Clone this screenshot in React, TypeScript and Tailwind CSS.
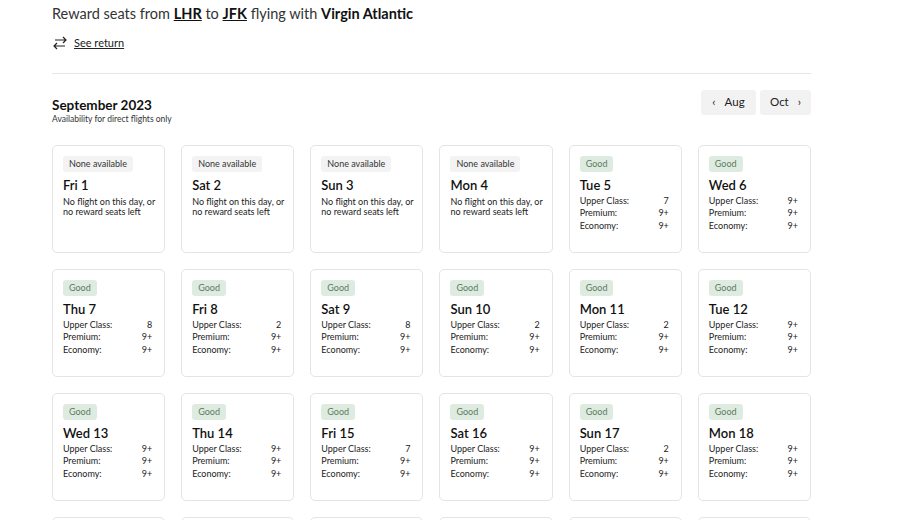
import React from "react";

type Day = { d: string; none?: boolean; empty?: boolean; u?: string; p?: string; e?: string };
const days: Day[] = [
  { d: "Fri 1", none: true }, { d: "Sat 2", none: true }, { d: "Sun 3", none: true }, { d: "Mon 4", none: true },
  { d: "Tue 5", u: "7", p: "9+", e: "9+" }, { d: "Wed 6", u: "9+", p: "9+", e: "9+" },
  { d: "Thu 7", u: "8", p: "9+", e: "9+" }, { d: "Fri 8", u: "2", p: "9+", e: "9+" },
  { d: "Sat 9", u: "8", p: "9+", e: "9+" }, { d: "Sun 10", u: "2", p: "9+", e: "9+" },
  { d: "Mon 11", u: "2", p: "9+", e: "9+" }, { d: "Tue 12", u: "9+", p: "9+", e: "9+" },
  { d: "Wed 13", u: "9+", p: "9+", e: "9+" }, { d: "Thu 14", u: "9+", p: "9+", e: "9+" },
  { d: "Fri 15", u: "7", p: "9+", e: "9+" }, { d: "Sat 16", u: "9+", p: "9+", e: "9+" },
  { d: "Sun 17", u: "2", p: "9+", e: "9+" }, { d: "Mon 18", u: "9+", p: "9+", e: "9+" },
  { d: "", empty: true }, { d: "", empty: true }, { d: "", empty: true },
  { d: "", empty: true }, { d: "", empty: true }, { d: "", empty: true },
];

function Card({ day }: { day: Day }) {
  if (day.empty) return <div className="h-[108px] rounded-[5px] border border-[#e4e4e4] bg-white" />;
  return (
    <div className="h-[108px] rounded-[5px] border border-[#e4e4e4] bg-white px-[10px] pt-[10px]">
      {day.none ? (
        <div className="w-fit rounded-[3px] bg-[#f3f3f3] px-[6px] py-[2px] text-[9px] leading-[12px] text-[#333]">None available</div>
      ) : (
        <div className="w-fit rounded-[3px] bg-[#deebe0] px-[6px] py-[2px] text-[9px] leading-[12px] text-[#5d7a62]">Good</div>
      )}
      <div className="mt-[5px] text-[13px] font-semibold leading-[16px] text-[#111]">{day.d}</div>
      {day.none ? (
        <div className="mt-[4px] whitespace-nowrap text-[9px] leading-[10px] text-[#222]">No flight on this day, or<br />no reward seats left</div>
      ) : (
        <div className="mt-[2px] pr-[2px] text-[9px] leading-[12.5px] text-[#222]">
          <div className="flex justify-between"><span>Upper Class:</span><span>{day.u}</span></div>
          <div className="flex justify-between"><span>Premium:</span><span>{day.p}</span></div>
          <div className="flex justify-between"><span>Economy:</span><span>{day.e}</span></div>
        </div>
      )}
    </div>
  );
}

export default function App() {
  return (
    <div className="h-[520px] overflow-hidden bg-white text-[#222]" style={{ fontFamily: "Lato, 'Open Sans', sans-serif" }}>
      <div className="ml-[52px] w-[759px]">
        <div className="pt-[4px] text-[14.5px] leading-[20px] text-[#333]">
          Reward seats from <span className="font-bold text-[#111] underline">LHR</span> to <span className="font-bold text-[#111] underline">JFK</span> flying with <span className="font-bold text-[#111]">Virgin Atlantic</span>
        </div>
        <div className="mt-[11px] flex items-center gap-[6px] text-[11px] text-[#222]">
          <svg width="16" height="14" viewBox="0 0 16 14" fill="none" stroke="#222" strokeWidth="1.2">
            <path d="M3 4h11M11 1l3 3-3 3M13 10H2M5 7l-3 3 3 3" />
          </svg>
          <span className="underline">See return</span>
        </div>
        <div className="mt-[21px] h-px bg-[#e6e6e6]" />
        <div className="mt-[23px] flex items-start justify-between">
          <div>
            <div className="text-[13.5px] font-bold leading-[17px] text-[#111]">September 2023</div>
            <div className="text-[8.5px] leading-[11px] text-[#333]">Availability for direct flights only</div>
          </div>
          <div className="mt-[-7px] flex gap-[4px]">
            <button className="flex h-[25px] w-[55px] items-center justify-center gap-[9px] rounded-[3px] bg-[#f2f2f2] text-[11.5px] text-[#222]"><span>‹</span><span>Aug</span></button>
            <button className="flex h-[25px] w-[51px] items-center justify-center gap-[9px] rounded-[3px] bg-[#f2f2f2] text-[11.5px] text-[#222]"><span>Oct</span><span>›</span></button>
          </div>
        </div>
        <div className="mt-[20px] grid grid-cols-6 gap-[16px]">
          {days.map((d, i) => <Card key={i} day={d} />)}
        </div>
      </div>
    </div>
  );
}
